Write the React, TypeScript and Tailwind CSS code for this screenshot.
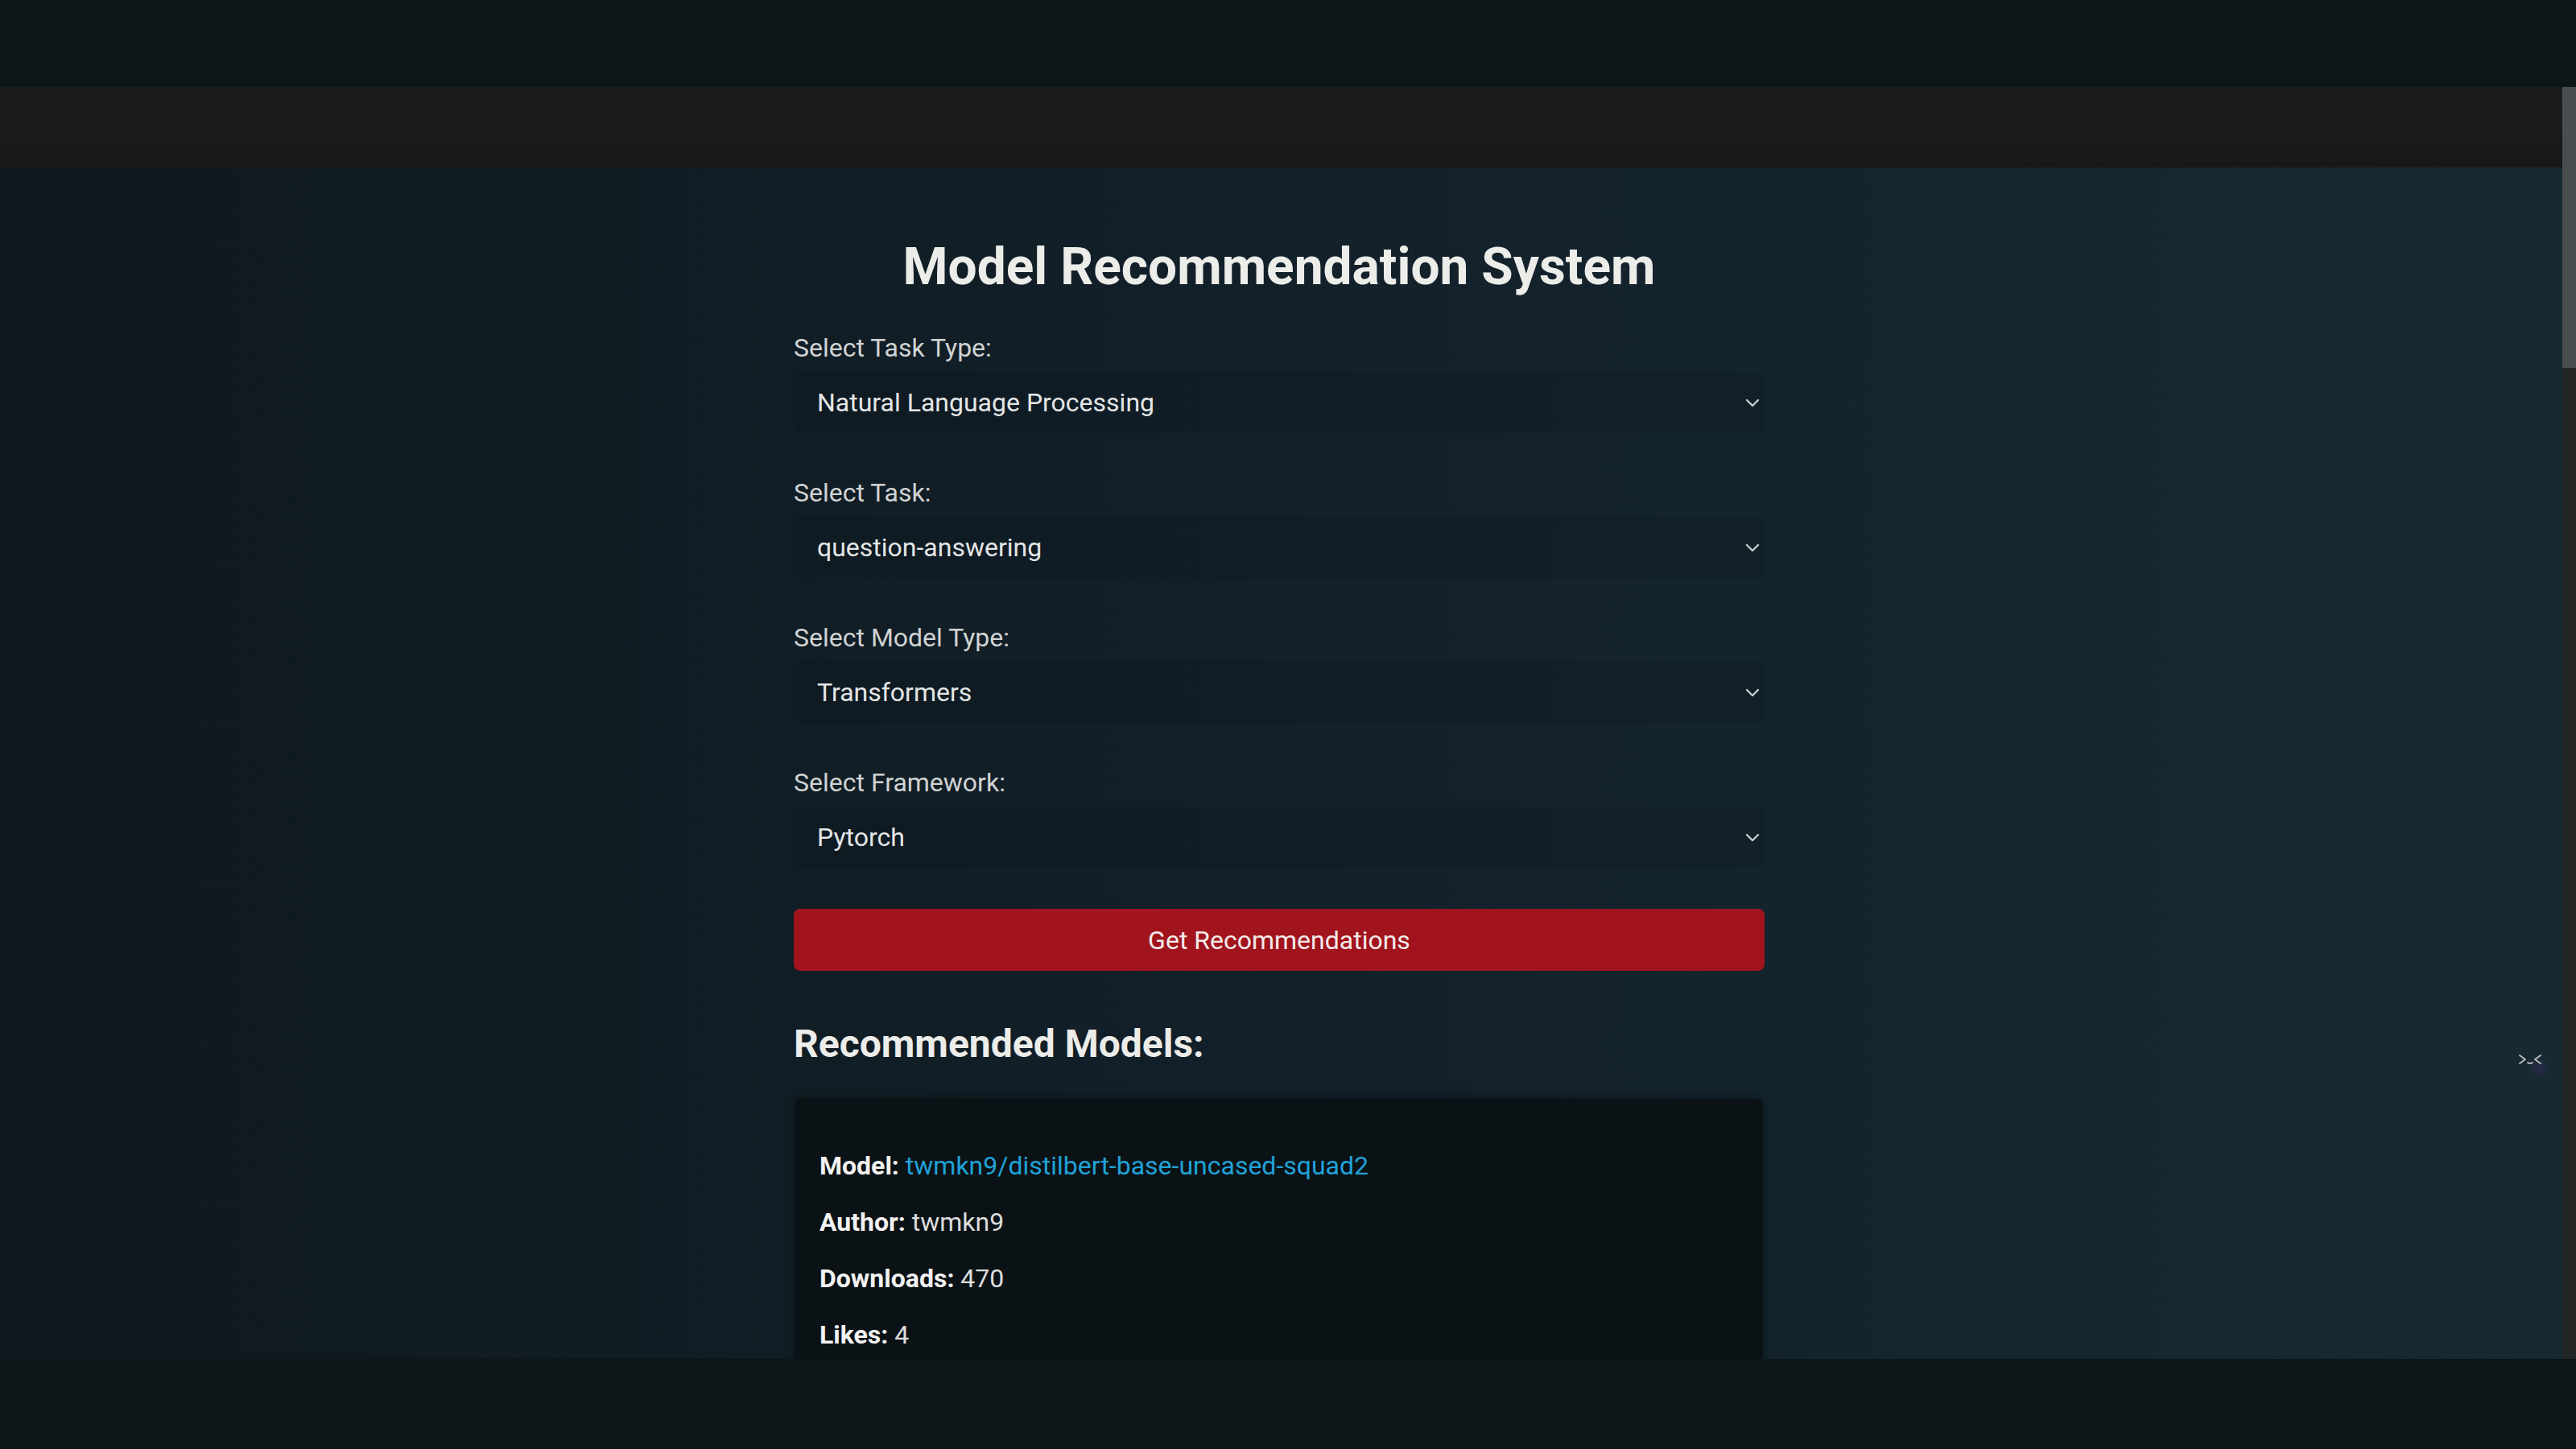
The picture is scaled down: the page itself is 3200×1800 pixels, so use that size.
import React from "react";

const fields = [
  { label: "Select Task Type:", value: "Natural Language Processing" },
  { label: "Select Task:", value: "question-answering" },
  { label: "Select Model Type:", value: "Transformers" },
  { label: "Select Framework:", value: "Pytorch" },
];

function Chevron() {
  return (
    <svg width="18" height="11" viewBox="0 0 18 11" fill="none">
      <path d="M2 2 L9 9 L16 2" stroke="#c9cccc" strokeWidth="2.4" strokeLinecap="round" strokeLinejoin="round" />
    </svg>
  );
}

function Field({ label, value, first }: { label: string; value: string; first?: boolean }) {
  return (
    <div className={first ? "flex flex-col mt-[44px]" : "flex flex-col mt-[55px]"}>
      <label className="text-[32px] leading-[38px] text-[#d0d3d3]">{label}</label>
      <div className="mt-[11px] h-[76px] flex items-center justify-between pl-[29px] pr-[6px] bg-[rgba(8,14,18,0.14)] rounded-[6px]">
        <span className="text-[32px] leading-[38px] text-[#e4e6e6]">{value}</span>
        <Chevron />
      </div>
    </div>
  );
}

export default function App() {
  return (
    <div
      className="w-[3200px] h-[1800px] overflow-hidden flex flex-col bg-[#0d1719]"
      style={{ fontFamily: "Roboto, 'Liberation Sans', Arial, sans-serif" }}
    >
      <div className="h-[108px] shrink-0 bg-[#0d1719]" />
      <div className="h-[1580px] shrink-0 flex">
        <div className="flex-1 flex flex-col relative overflow-hidden">
          <header className="h-[100px] shrink-0 bg-gradient-to-b from-[#1c1c1c] via-[#1b1b1b] to-[#191817]" />
          <main className="flex-1 overflow-hidden bg-gradient-to-r from-[#0f191d] via-[#12202a] to-[#172a31]">
            <div className="w-[1206px] ml-[986px] pt-[86px] flex flex-col">
              <h1 className="text-[64px] leading-[75px] font-bold text-center text-[#ecece9]">
                Model Recommendation System
              </h1>
              {fields.map((f, i) => (
                <Field key={f.label} label={f.label} value={f.value} first={i === 0} />
              ))}
              <button className="mt-[51px] h-[77px] w-full rounded-[8px] bg-[#a1141d] text-[32px] leading-[38px] text-[#f3eaea]">
                Get Recommendations
              </button>
              <h2 className="mt-[63px] text-[48px] leading-[56px] font-bold text-[#ecece9]">
                Recommended Models:
              </h2>
              <div className="mt-[40px] mx-[2px] pt-[64px] px-[30px] pb-[64px] bg-[#0b1215] rounded-[6px] shadow-[0_0_14px_rgba(0,0,0,0.45)] flex flex-col gap-[32px] text-[32px] leading-[38px] text-[#dcdede]">
                <p>
                  <span className="font-bold text-[#f2f2f2]">Model:</span>{" "}
                  <span className="text-[#20a2d8]">twmkn9/distilbert-base-uncased-squad2</span>
                </p>
                <p>
                  <span className="font-bold text-[#f2f2f2]">Author:</span> twmkn9
                </p>
                <p>
                  <span className="font-bold text-[#f2f2f2]">Downloads:</span> 470
                </p>
                <p>
                  <span className="font-bold text-[#f2f2f2]">Likes:</span> 4
                </p>
              </div>
            </div>
          </main>
          <div className="absolute right-[22px] top-[1190px] w-[36px] h-[36px] flex items-center justify-center">
            <div className="absolute right-[0px] bottom-[0px] w-[14px] h-[14px] rounded-full bg-[#5b2a8a] opacity-40 blur-[5px]" />
            <svg width="32" height="16" viewBox="0 0 32 16" fill="none" className="relative">
              <path d="M3 3 L10 8 L3 13" stroke="#b6baba" strokeWidth="2" strokeLinecap="round" strokeLinejoin="round" />
              <path d="M13 12 Q16 14 19 12" stroke="#b6baba" strokeWidth="2" strokeLinecap="round" />
              <path d="M29 3 L22 8 L29 13" stroke="#b6baba" strokeWidth="2" strokeLinecap="round" strokeLinejoin="round" />
            </svg>
          </div>
        </div>
        <div className="w-[17px] shrink-0 flex flex-col bg-[#242526]">
          <div className="h-[349px] bg-[#4a4d50]" />
        </div>
      </div>
      <div className="h-[112px] shrink-0 bg-[#0d1618]" />
    </div>
  );
}
